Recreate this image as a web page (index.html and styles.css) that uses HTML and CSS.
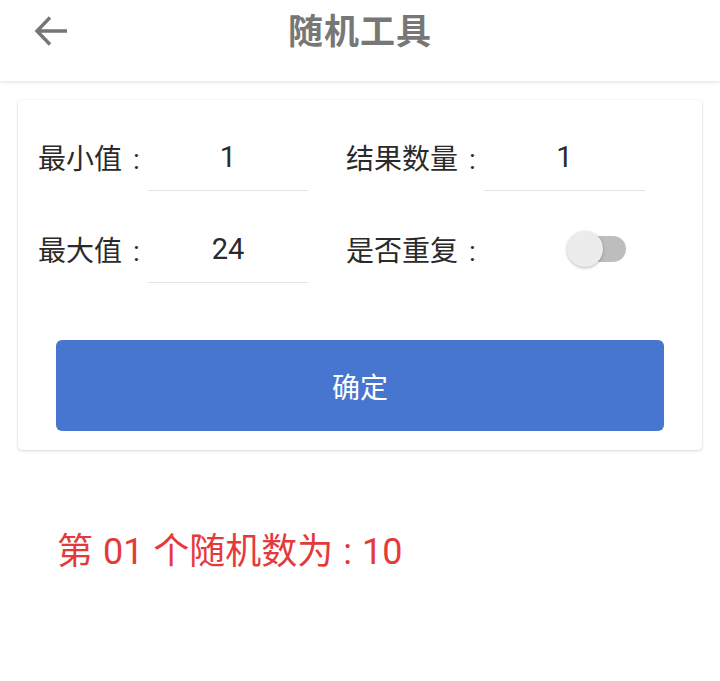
FILE: index.html
```html
<!DOCTYPE html>
<html lang="zh-CN">
<head>
<meta charset="utf-8">
<title>随机工具</title>
<link rel="stylesheet" href="styles.css">
</head>
<body>
<header class="appbar">
  <div class="bar">
    <span class="back">
      <svg width="34" height="32" viewBox="0 0 34 32" aria-hidden="true">
        <path d="M3 16 H33 M16 2.5 L3 16 L16 29.5" fill="none" stroke="#767676" stroke-width="3.4" stroke-linecap="butt" stroke-linejoin="miter"/>
      </svg>
    </span>
    <h1 class="title">随机工具</h1>
  </div>
</header>

<main class="content">
  <section class="card">
    <div class="form">
      <div class="lbl">最小值 :</div>
      <div class="field">1</div>
      <div class="lbl lbl-right">结果数量 :</div>
      <div class="field">1</div>

      <div class="lbl">最大值 :</div>
      <div class="field">24</div>
      <div class="lbl lbl-right">是否重复 :</div>
      <div class="switch-cell">
        <span class="switch"><span class="track"></span><span class="thumb"></span></span>
      </div>
    </div>
    <button class="confirm" type="button">确定</button>
  </section>

  <p class="result">第 01 个随机数为 : 10</p>
</main>
</body>
</html>
```

FILE: styles.css
```css
* { box-sizing: border-box; }

html, body {
  margin: 0;
  padding: 0;
  background: #ffffff;
  font-family: Roboto, "Noto Sans CJK SC", "Noto Sans", sans-serif;
  color: #2a2a2a;
}

.appbar {
  height: 81px;
  background: #ffffff;
  box-shadow: 0 1px 4px rgba(0, 0, 0, 0.13);
  position: relative;
  z-index: 1;
}

.bar {
  height: 64px;
  display: flex;
  align-items: center;
  justify-content: center;
  position: relative;
}

.back {
  position: absolute;
  left: 34px;
  top: 15px;
  width: 34px;
  height: 32px;
  display: block;
}

.back svg { display: block; }

.title {
  margin: 0;
  font-size: 35px;
  font-weight: 700;
  color: #777777;
  letter-spacing: 1px;
  line-height: 1;
}

.content {
  padding-top: 19px;
}

.card {
  margin: 0 18px;
  background: #ffffff;
  border-radius: 4px;
  box-shadow: 0 1px 3px rgba(0, 0, 0, 0.16), 0 0 1px rgba(0, 0, 0, 0.08);
  padding: 23px 20px 19px 20px;
}

.form {
  display: grid;
  grid-template-columns: 110px 160px 176px 161px;
  grid-auto-rows: 68px;
  row-gap: 24px;
}

.lbl {
  display: flex;
  align-items: center;
  font-size: 28px;
  color: #2a2a2a;
  white-space: pre;
  word-spacing: 4px;
}

.lbl-right {
  padding-left: 38px;
}

.field {
  display: flex;
  align-items: center;
  justify-content: center;
  font-size: 29px;
  color: #2a2a2a;
  border-bottom: 1px solid #e3e3e3;
}

.switch-cell {
  display: flex;
  align-items: center;
  padding-left: 83px;
}

.switch {
  position: relative;
  width: 59px;
  height: 36px;
  display: block;
}

.track {
  position: absolute;
  left: 6px;
  right: 0;
  top: 5px;
  height: 26px;
  border-radius: 13px;
  background: #bdbdbd;
}

.thumb {
  position: absolute;
  left: 0;
  top: 0;
  width: 36px;
  height: 36px;
  border-radius: 50%;
  background: #ececec;
  box-shadow: 0 1px 3px rgba(0, 0, 0, 0.28);
}

.confirm {
  display: flex;
  align-items: center;
  justify-content: center;
  width: calc(100% - 36px);
  height: 91px;
  margin: 57px 18px 0 18px;
  border: none;
  border-radius: 6px;
  background: #4676cf;
  color: #ffffff;
  font-family: Roboto, "Noto Sans CJK SC", sans-serif;
  font-size: 28px;
  padding: 0;
}

.result {
  margin: 81px 0 0 0;
  padding-left: 57px;
  font-size: 36px;
  line-height: 42px;
  color: #e53a3a;
  white-space: pre;
  word-spacing: 1px;
}
```
